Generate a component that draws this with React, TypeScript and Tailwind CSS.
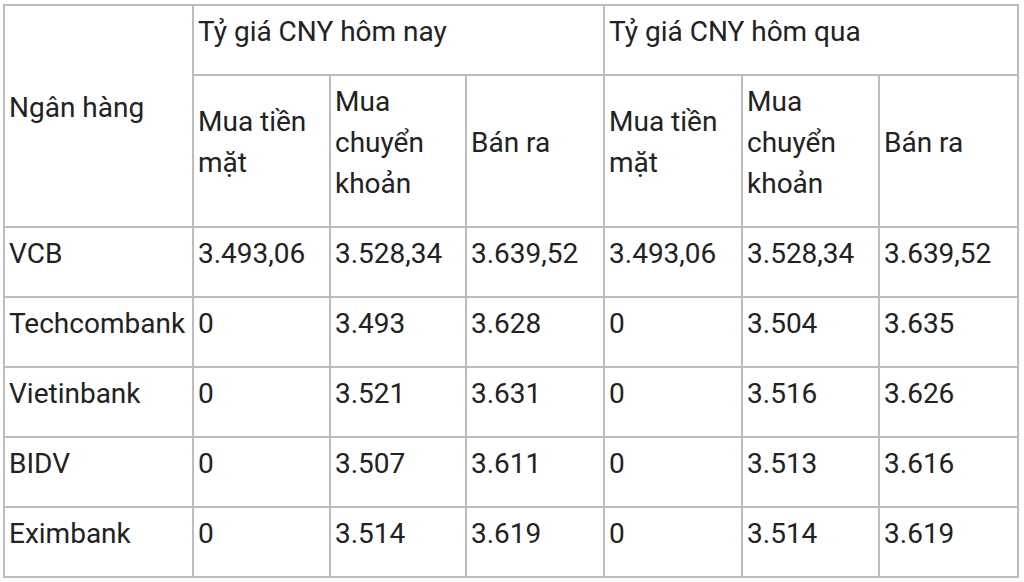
import React from "react";

const rows = [
  ["VCB", "3.493,06", "3.528,34", "3.639,52", "3.493,06", "3.528,34", "3.639,52"],
  ["Techcombank", "0", "3.493", "3.628", "0", "3.504", "3.635"],
  ["Vietinbank", "0", "3.521", "3.631", "0", "3.516", "3.626"],
  ["BIDV", "0", "3.507", "3.611", "0", "3.513", "3.616"],
  ["Eximbank", "0", "3.514", "3.619", "0", "3.514", "3.619"],
];

const cell = "border-2 border-[#bdbdbd] px-[4px] pt-[4px] pb-[22px] align-middle text-left font-normal";

export default function App() {
  return (
    <div className="min-h-screen bg-white pl-[3px] pt-[4px] text-[#222] font-['Roboto',sans-serif] text-[28px] leading-[41px]">
      <table className="w-[1014px] table-fixed border-collapse">
        <colgroup>
          <col className="w-[189px]" />
          <col className="w-[137px]" />
          <col className="w-[136px]" />
          <col className="w-[138px]" />
          <col className="w-[138px]" />
          <col className="w-[137px]" />
          <col className="w-[139px]" />
        </colgroup>
        <thead>
          <tr className="h-[70px]">
            <th rowSpan={2} className={cell}>Ngân hàng</th>
            <th colSpan={3} className={cell}>Tỷ giá CNY hôm nay</th>
            <th colSpan={3} className={cell}>Tỷ giá CNY hôm qua</th>
          </tr>
          <tr className="h-[152px]">
            <th className={cell}>Mua tiền mặt</th>
            <th className={cell}>Mua chuyển khoản</th>
            <th className={cell}>Bán ra</th>
            <th className={cell}>Mua tiền mặt</th>
            <th className={cell}>Mua chuyển khoản</th>
            <th className={cell}>Bán ra</th>
          </tr>
        </thead>
        <tbody>
          {rows.map((r) => (
            <tr key={r[0]} className="h-[70px]">
              {r.map((v, i) => (
                <td key={i} className={cell}>{v}</td>
              ))}
            </tr>
          ))}
        </tbody>
      </table>
    </div>
  );
}
